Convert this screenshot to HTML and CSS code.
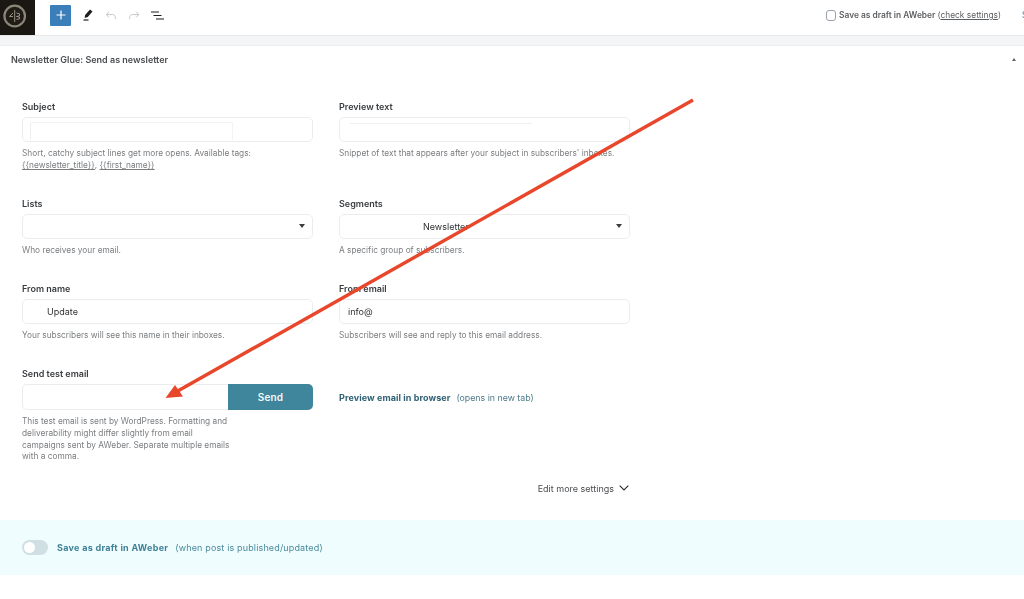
FILE: index.html
```html
<!DOCTYPE html>
<html lang="en">
<head>
<meta charset="utf-8">
<title>Newsletter Glue</title>
<link rel="stylesheet" href="styles.css">
</head>
<body>
<div class="page">
  <header class="topbar">
    <div class="logo">
      <svg width="35" height="35" viewBox="0 0 35 35"><rect width="35" height="35" fill="#1b1713"/><circle cx="14.700" cy="16" r="10.300" fill="#211c17" stroke="#8a867a" stroke-width="2.200"/><path d="M14.700 10v12M13 13l-3.500 3.500H13M16.500 13l3 .8v2l-3 .7 3 .6v1.700l-3 .7" fill="none" stroke="#b3ad9c" stroke-width=".8"/></svg>
    </div>
    <div class="tools">
      <button class="add" type="button"><svg width="10" height="10" viewBox="0 0 10 10"><path d="M5 .5v9M.5 5h9" stroke="#fff" stroke-width="1.200"/></svg></button>
      <svg class="tool pen" width="10" height="12" viewBox="0 0 10 12"><path d="M7 .5l2.500 2-4.700 5.500-3.100 1 .4-3z" fill="#1e1e1e"/><path d="M.5 11h5" stroke="#1e1e1e" stroke-width="1.200"/></svg>
      <svg class="tool undo" width="11" height="9" viewBox="0 0 11 9"><path d="M4 .8L1.200 3.600 4 6.400M1.200 3.600H7.500c1.800 0 2.800 1.200 2.800 2.800v1.800" fill="none" stroke="#c4c6c8" stroke-width="1"/></svg>
      <svg class="tool redo" width="11" height="9" viewBox="0 0 11 9"><path d="M7 .8l2.800 2.800L7 6.400M9.800 3.600H3.500C1.700 3.600.7 4.800.7 6.400v1.800" fill="none" stroke="#c4c6c8" stroke-width="1"/></svg>
      <svg class="tool list" width="13" height="9" viewBox="0 0 13 9"><path d="M0 1h8M2.500 4.500h8M5 8h8" stroke="#1e1e1e" stroke-width="1.200"/></svg>
    </div>
    <div class="draft-top">
      <span class="check"></span>
      <span class="draft-text">Save as draft in AWeber <span class="paren">(<u>check settings</u>)</span></span>
      <span class="cut">S</span>
    </div>
  </header>
  <div class="gap"></div>
  <section class="panel">
    <div class="panel-head">
      <h2>Newsletter Glue: Send as newsletter</h2>
      <span class="tri"></span>
    </div>
    <div class="form">
      <div class="field row-one">
        <label>Subject</label>
        <div class="input"><span class="ghost"></span></div>
        <p class="help">Short, catchy subject lines get more opens. Available tags:<br><u>{{newsletter_title}}</u>, <u>{{first_name}}</u></p>
      </div>
      <div class="field row-one">
        <label>Preview text</label>
        <div class="input"><span class="ghost ghost-top"></span></div>
        <p class="help">Snippet of text that appears after your subject in subscribers' inboxes.</p>
      </div>
      <div class="field row-two">
        <label class="tight">Lists</label>
        <div class="input select"><span class="caret"></span></div>
        <p class="help wide-gap">Who receives your email.</p>
      </div>
      <div class="field row-two">
        <label class="tight">Segments</label>
        <div class="input select"><span class="value segment">Newsletter</span><span class="caret"></span></div>
        <p class="help wide-gap">A specific group of subscribers.</p>
      </div>
      <div class="field row-two">
        <label>From name</label>
        <div class="input"><span class="value name">Update</span></div>
        <p class="help">Your subscribers will see this name in their inboxes.</p>
      </div>
      <div class="field row-two">
        <label>From email</label>
        <div class="input"><span class="value">info@</span></div>
        <p class="help">Subscribers will see and reply to this email address.</p>
      </div>
      <div class="field">
        <label>Send test email</label>
        <div class="input test"><span class="test-space"></span><button class="send" type="button">Send</button></div>
        <p class="help narrow">This test email is sent by WordPress. Formatting and deliverability might differ slightly from email campaigns sent by AWeber. Separate multiple emails with a comma.</p>
      </div>
      <div class="preview">
        <a>Preview email in browser</a><span>(opens in new tab)</span>
      </div>
    </div>
    <div class="more">
      <span>Edit more settings</span>
      <svg width="10" height="6" viewBox="0 0 10 6"><path d="M.7.7L5 5l4.300-4.300" fill="none" stroke="#2b2b2b" stroke-width="1.100"/></svg>
    </div>
    <div class="band">
      <span class="toggle"><span class="knob"></span></span>
      <strong>Save as draft in AWeber</strong>
      <span class="band-note">(when post is published/updated)</span>
    </div>
  </section>
  <svg class="arrow" width="1024" height="599" viewBox="0 0 1024 599">
    <path d="M693 100L176 392" stroke="#e8472b" stroke-width="3.400" fill="none"/>
    <path d="M165.500 398L175 385 183 396.500z" fill="#e8472b"/>
  </svg>
</div>
</body>
</html>
```
FILE: styles.css
```css
* { box-sizing: border-box; }
html, body { margin: 0; padding: 0; background: #fff; }
body { font-family: Inter, "Liberation Sans", sans-serif; color: #3c434a; overflow: hidden; }
.page { position: relative; width: 1024px; height: 599px; overflow: hidden; filter: blur(.35px); }
.topbar { height: 36px; display: flex; align-items: center; padding-bottom: 5px; border-bottom: 1px solid #e6e8ea; }
.logo { width: 35px; height: 35px; flex: none; align-self: flex-start; }
.logo svg { display: block; }
.tools { display: flex; align-items: center; margin-left: 15px; }
.add { width: 21px; height: 21px; padding: 0; border: 0; border-radius: 1px; background: #3a7fba; display: flex; align-items: center; justify-content: center; margin-right: 12px; }
.tool { display: block; flex: none; }
.pen { margin-right: 12px; }
.undo { margin-right: 13px; }
.redo { margin-right: 11px; }
.draft-top { margin-left: auto; display: flex; align-items: center; font-size: 8.400px; color: #5c5f62; white-space: nowrap; }
.check { width: 10px; height: 11px; border: 1px solid #9aa1aa; border-radius: 3px; margin-right: 3px; background: #fff; }
.draft-text { font-weight: 600; }
.paren { font-weight: 400; }
.cut { color: #3a7fba; margin-left: 21px; width: 2px; overflow: hidden; }
.gap { height: 9px; background: #f3f5f6; }
.panel { border-top: 1px solid #eceeef; }
.panel-head { height: 27px; display: flex; align-items: center; justify-content: space-between; padding: 0 8px 0 11px; }
.panel-head h2 { margin: 0; font-size: 9px; font-weight: 600; color: #4a4d50; }
.tri { width: 0; height: 0; border-left: 2.500px solid transparent; border-right: 2.500px solid transparent; border-bottom: 3.500px solid #5f6265; }
.form { display: grid; grid-template-columns: 291px 291px; column-gap: 26px; padding: 28px 0 0 22px; }
.field { display: flex; flex-direction: column; }
.row-one { height: 97px; }
.row-two { height: 85px; }
label { font-size: 9px; line-height: 12px; font-weight: 600; color: #3a3d40; margin-bottom: 4px; }
label.tight { margin-bottom: 3.500px; }
.input { position: relative; height: 25px; border: 1px solid #eaecee; border-radius: 5px; display: flex; align-items: center; font-size: 9px; color: #2f3133; }
.value { padding-left: 8px; }
.name { padding-left: 24px; }
.segment { padding-left: 83px; }
.ghost { display: block; margin: 3px 0 0 7px; width: 203px; height: 18px; border-left: 1px solid #eceeef; border-top: 1px solid #f2f3f4; border-right: 1px solid #f2f3f4; border-radius: 2px 2px 0 0; }
.ghost-top { margin: 0 0 13px 9px; width: 184px; height: 1px; border: 0; background: #f0f1f2; }
.select { justify-content: space-between; padding-right: 7px; }
.caret { margin-left: auto; width: 0; height: 0; border-left: 3.500px solid transparent; border-right: 3.500px solid transparent; border-top: 4px solid #3a3d40; }
.help { margin: 6px 0 0; font-size: 8.300px; line-height: 11.800px; color: #7a7d80; }
.wide-gap { margin-top: 6.500px; }
.narrow { width: 208px; }
.test { height: 26px; padding: 0; border-right: 0; }
.test-space { flex: 1; height: 100%; }
.send { width: 85px; height: 26px; margin: -1px 0; padding: 0; border: 0; border-radius: 0 5px 5px 0; background: #3f859c; color: #f4f8f9; font: 600 10px Inter, "Liberation Sans", sans-serif; letter-spacing: .2px; }
.preview { display: flex; align-items: center; height: 26px; margin-top: 16px; font-size: 8.800px; color: #4d7a8c; }
.preview a { font-size: 9px; letter-spacing: .08px; font-weight: 700; color: #2f6175; margin-right: 6px; }
.more { display: flex; justify-content: flex-end; align-items: center; gap: 5px; width: 629px; height: 16px; margin-top: 17px; font-size: 9px; color: #4a4d50; }
.band { display: flex; align-items: center; height: 55px; margin-top: 24px; padding-left: 22px; background: #effdfe; font-size: 9px; letter-spacing: .15px; color: #4a8a9e; }
.toggle { width: 26px; height: 15px; border-radius: 8px; background: #cfdfe4; display: flex; align-items: center; padding-left: 2px; margin-right: 9px; }
.knob { width: 11px; height: 11px; border-radius: 50%; background: #fff; }
.band strong { font-weight: 700; letter-spacing: .3px; color: #3f8298; margin-right: 7px; }
.arrow { position: absolute; left: 0; top: 0; pointer-events: none; }
```
